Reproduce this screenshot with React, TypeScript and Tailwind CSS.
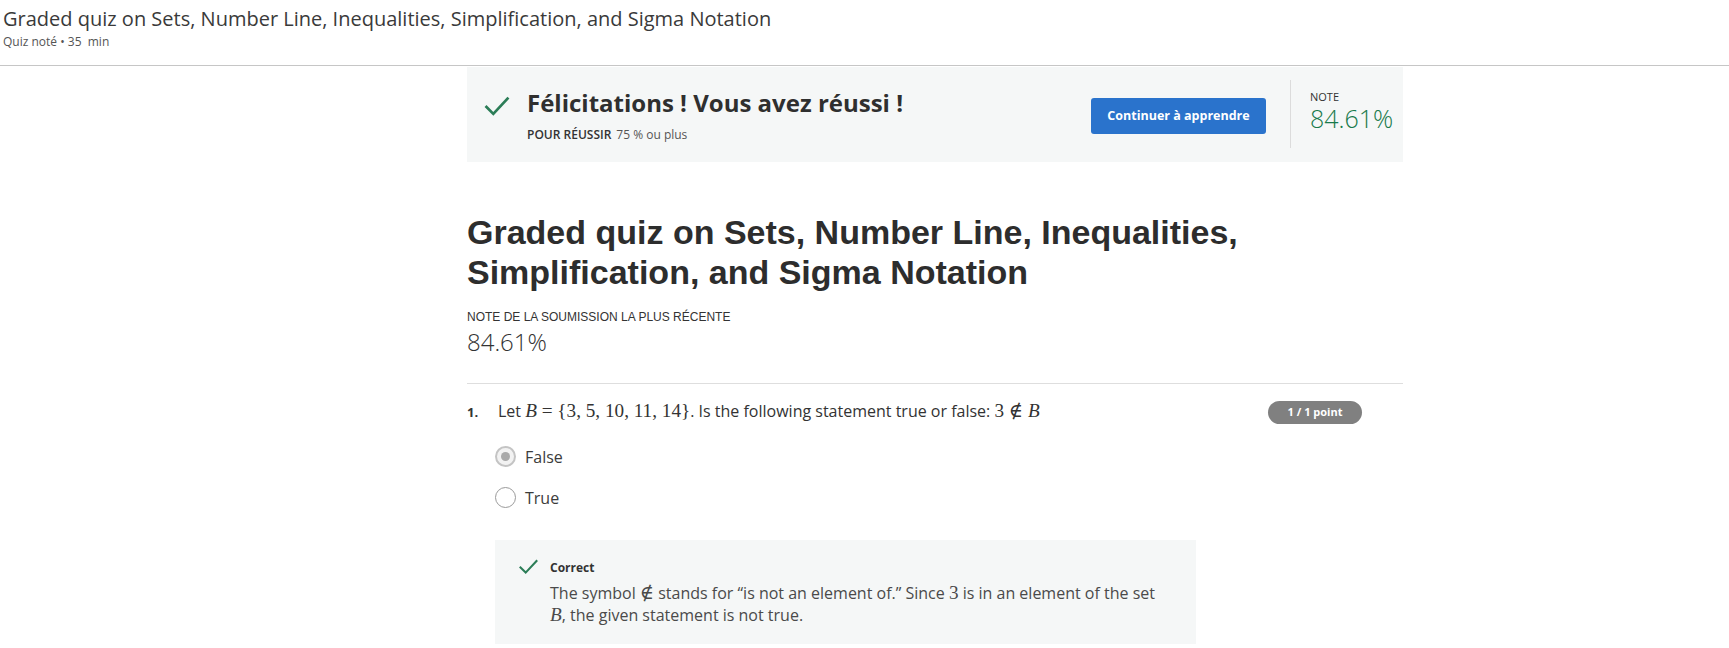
import React from 'react';

const math = "font-['Liberation_Serif','DejaVu_Serif',serif] text-[1.2em] leading-none";

function Check({ className }: { className?: string }) {
    return (
        <svg viewBox="0 0 24 20" className={className} fill="none">
            <path d="M2 10.5l6.5 6.5L22 2.5" stroke="#2b7d57" strokeWidth="2.6" strokeLinecap="square" />
        </svg>
    );
}

function Radio({ checked, label }: { checked?: boolean; label: string }) {
    return (
        <div className="flex h-[41px] items-center">
            {checked ? (
                <span className="flex h-[21px] w-[21px] items-center justify-center rounded-full border-2 border-[#c4c4c4] bg-[#f2f2f2]">
                    <span className="h-[9px] w-[9px] rounded-full bg-[#a9a9a9]" />
                </span>
            ) : (
                <span className="h-[21px] w-[21px] rounded-full border-[1.5px] border-[#9a9a9a] bg-white" />
            )}
            <span className="ml-[9px] text-[16px] leading-6 text-[#3c3c3c]">{label}</span>
        </div>
    );
}

export default function App() {
    return (
        <div className="min-h-[648px] bg-white font-['Open_Sans',sans-serif] text-[#333]">
            <header className="h-[66px] border-b border-[#c6c6c6] pl-[3px] pt-[5px]">
                <h1 className="text-[20px] leading-[28px] text-[#3a3a3a]">
                    Graded quiz on Sets, Number Line, Inequalities, Simplification, and Sigma Notation
                </h1>
                <p className="mt-[2px] text-[12px] leading-[14px] text-[#555]">Quiz noté • 35&nbsp; min</p>
            </header>

            <main className="ml-[467px] w-[936px]">
                <section className="mt-px flex h-[95px] items-start bg-[#f5f7f7]">
                    <Check className="ml-[17px] mt-[29px] h-[21px] w-[26px]" />
                    <div className="ml-[17px] mt-[21px]">
                        <h2 className="text-[24px] font-bold leading-[30px] text-[#2f2f2f]">
                            Félicitations ! Vous avez réussi !
                        </h2>
                        <p className="mt-[9px] text-[12px] leading-4 text-[#333]">
                            <span className="font-semibold uppercase">Pour réussir</span>
                            <span className="ml-[5px] text-[#555]">75 % ou plus</span>
                        </p>
                    </div>
                    <div className="flex-1" />
                    <button className="mt-[31px] h-[36px] w-[175px] rounded-[3px] bg-[#2a73cc] text-[12.5px] font-bold text-white">
                        Continuer à apprendre
                    </button>
                    <div className="ml-[24px] mt-[13px] h-[68px] w-px bg-[#dcdcdc]" />
                    <div className="ml-[19px] mt-[23px] w-[93px]">
                        <p className="text-[11px] leading-[14px] text-[#333]">NOTE</p>
                        <p className="-mt-px text-[25px] font-light leading-[30px] text-[#187a4b]">84.61%</p>
                    </div>
                </section>

                <h1 className="mt-[50px] font-['Liberation_Sans',Arial,sans-serif] text-[34px] font-bold leading-[40px] text-[#2d2d2d]">
                    Graded quiz on Sets, Number Line, Inequalities,
                    <br />
                    Simplification, and Sigma Notation
                </h1>
                <p className="mt-[17px] font-['Liberation_Sans',Arial,sans-serif] text-[12px] leading-4 text-[#333]">
                    NOTE DE LA SOUMISSION LA PLUS RÉCENTE
                </p>
                <p className="mt-[3px] text-[24px] font-light leading-[28px] text-[#333]">84.61%</p>

                <div className="mt-[27px] border-t border-[#dedede] pt-[15px]">
                    <div className="flex items-start">
                        <span className="w-[31px] pt-[1px] text-[13px] font-bold leading-6 text-[#333]">1.</span>
                        <p className="flex-1 text-[16px] leading-6 text-[#333]">
                            Let <span className={math}><i>B</i> = {'{'}3, 5, 10, 11, 14{'}'}</span>. Is the following
                            statement true or false: <span className={math}>3 ∉ <i>B</i></span>
                        </p>
                        <span className="mr-[41px] mt-[2px] flex h-[23px] w-[94px] items-center justify-center rounded-full bg-[#808080] text-[11px] font-bold text-white">
                            1 / 1 point
                        </span>
                    </div>

                    <div className="ml-[28px] mt-[12px]">
                        <Radio checked label="False" />
                        <Radio label="True" />
                    </div>

                    <div className="ml-[28px] mt-[22px] flex h-[104px] w-[701px] items-start bg-[#f5f7f7] pl-[23px] pt-[20px]">
                        <Check className="mt-[-1px] h-[16px] w-[21px]" />
                        <div className="ml-[11px]">
                            <p className="text-[12px] font-bold leading-4 text-[#333]">Correct</p>
                            <p className="mt-[6px] text-[16px] leading-[22px] text-[#4a4a4a]">
                                The symbol <span className={math}>∉</span> stands for “is not an element of.” Since{' '}
                                <span className={math}>3</span> is in an element of the set
                                <br />
                                <span className={math}><i>B</i></span>, the given statement is not true.
                            </p>
                        </div>
                    </div>
                </div>
            </main>
        </div>
    );
}
